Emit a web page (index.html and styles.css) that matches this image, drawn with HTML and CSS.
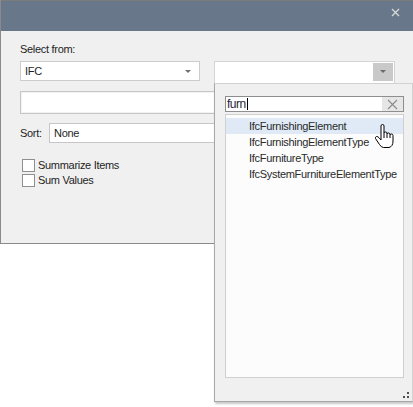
FILE: index.html
```html
<!DOCTYPE html>
<html lang="en">
<head>
    <meta charset="UTF-8">
    <title>Select from</title>
    <link rel="stylesheet" href="styles.css">
</head>
<body>
    <div class="dialog">
        <div class="titlebar">
            <svg class="close" width="9" height="9" viewBox="0 0 9 9"><path d="M1 1 L8 8 M8 1 L1 8" stroke="#d6d6d6" stroke-width="1.4"/></svg>
        </div>
        <div class="content">
            <div class="label">Select from:</div>
            <div class="combo-row">
                <div class="combo combo-source">
                    <span>IFC</span>
                    <svg class="arrow" width="6" height="4" viewBox="0 0 6 4"><path d="M0 0 H6 L3 3 Z" fill="#707070"/></svg>
                </div>
                <div class="combo combo-type">
                    <span class="drop-btn"><svg width="6" height="4" viewBox="0 0 6 4"><path d="M0 0 H6 L3 3 Z" fill="#6a6a6a"/></svg></span>
                </div>
            </div>
            <div class="textbox"></div>
            <div class="sort-row">
                <span class="sort-label">Sort:</span>
                <div class="combo combo-sort"><span>None</span></div>
            </div>
            <div class="checks">
                <label class="check"><span class="box"></span>Summarize Items</label>
                <label class="check"><span class="box"></span>Sum Values</label>
            </div>
        </div>
    </div>

    <div class="popup">
        <div class="search">
            <span class="search-text">furn</span><span class="caret"></span>
            <span class="clear"><svg width="11" height="11" viewBox="0 0 11 11"><path d="M1 1 L10 10 M10 1 L1 10" stroke="#8a8a8a" stroke-width="1.1"/></svg></span>
        </div>
        <ul class="list">
            <li class="active">IfcFurnishingElement</li>
            <li>IfcFurnishingElementType</li>
            <li>IfcFurnitureType</li>
            <li>IfcSystemFurnitureElementType</li>
        </ul>
        <div class="grip">
            <span class="dot d1"></span><span class="dot d2"></span><span class="dot d3"></span>
        </div>
    </div>

    <svg class="hand" width="21" height="25" viewBox="0 0 21 25">
        <path d="M7 2 Q7 0.5 8.5 0.5 Q10 0.5 10 2 L10 9 Q10 8 11.5 8 Q13 8 13 9.5 L13 10 Q13 9 14.5 9 Q16 9 16 10.5 L16 11 Q16 10 17.5 10 Q19 10 19 11.5 L19 17 Q19 22.5 15 23.5 L9.5 23.5 Q7.5 23.5 5.5 20.5 L1.5 14.5 Q1 13 2.5 12.5 Q4 12.3 5 13.8 L7 16 Z" fill="#fff" stroke="#000" stroke-width="1"/>
        <path d="M10 9 V14 M13 10 V14 M16 11 V14" stroke="#000" stroke-width="1" fill="none"/>
    </svg>
</body>
</html>
```

FILE: styles.css
```css
/* page */
html, body {
    margin: 0;
    padding: 0;
    overflow: hidden;
}

body {
    font-family: "Liberation Sans", Arial, sans-serif;
    font-size: 11px;
    letter-spacing: -0.3px;
    color: #1e1e1e;
    background: #ffffff;
    width: 413px;
    height: 407px;
    position: relative;
}

/* dialog window */
.dialog {
    width: 100%;
    height: 244px;
    box-sizing: border-box;
    border-left: 1px solid #8a8a8a;
    border-bottom: 1px solid #8a8a8a;
    background: #f0f0f0;
}

.titlebar {
    height: 31px;
    box-sizing: border-box;
    border-top: 1px solid #7c7c7c;
    background: #687789;
    display: flex;
    justify-content: flex-end;
    align-items: flex-start;
}

.close {
    margin: 7px 13px 0 0;
}

.content {
    padding: 11px 0 0 19px;
}

.label {
    line-height: 14px;
    height: 14px;
}

/* combo boxes */
.combo-row {
    display: flex;
    align-items: flex-start;
    gap: 14px;
    margin-top: 5px;
}

.combo {
    box-sizing: border-box;
    height: 20px;
    background: #fff;
    border: 1px solid #cccccc;
    display: flex;
    align-items: center;
    padding-left: 4px;
    position: relative;
}

.combo-source {
    width: 180px;
}

.combo-source .arrow {
    position: absolute;
    right: 8px;
    top: 8px;
}

.combo-type {
    width: 181px;
    height: 23px;
    padding: 0;
    justify-content: flex-end;
    border-color: #d4d4d4;
}

.drop-btn {
    width: 20px;
    height: 18px;
    margin-right: 1px;
    margin-top: -1px;
    background: #c9c9c9;
    display: flex;
    align-items: center;
    justify-content: center;
}

.textbox {
    box-sizing: border-box;
    width: 380px;
    height: 23px;
    margin-top: 7px;
    background: #fff;
    border: 1px solid #c6c6c6;
    box-shadow: inset 0 0 0 1px #f2f2f2;
}

.sort-row {
    display: flex;
    align-items: center;
    margin-top: 9px;
}

.sort-label {
    width: 29px;
}

.combo-sort {
    width: 340px;
    border-color: #c6c6c6;
}

/* checkboxes */
.checks {
    margin-top: 16px;
    display: flex;
    flex-direction: column;
    gap: 2px;
}

.check {
    display: flex;
    align-items: center;
    height: 13px;
    line-height: 13px;
}

.box {
    width: 11px;
    height: 11px;
    margin: 0 3px 0 2px;
    border: 1px solid #8f8f8f;
    background: #fff;
}

/* dropdown popup */
.popup {
    position: absolute;
    left: 214px;
    top: 83px;
    width: 199px;
    height: 319px;
    box-sizing: border-box;
    border: 1px solid #a8a8a8;
    border-top-color: #d2d2d2;
    border-right-color: #d2d2d2;
    background: #f0f0f0;
    padding: 12px 8px 0 10px;
    box-shadow: 1px 2px 2px rgba(0, 0, 0, 0.22);
}

.search {
    box-sizing: border-box;
    height: 16px;
    background: #fff;
    border: 1px solid #8e8e8e;
    display: flex;
    align-items: center;
    padding-left: 1px;
    font-size: 12px;
    letter-spacing: -0.5px;
    color: #1e1e3a;
}

.caret {
    width: 1px;
    height: 12px;
    margin-left: 1px;
    background: #000;
}

.clear {
    margin-left: auto;
    width: 21px;
    height: 14px;
    background: #e6e6e6;
    display: flex;
    align-items: center;
    justify-content: center;
}

.list {
    list-style: none;
    margin: 2px 0 0 0;
    padding: 3px 0 0 0;
    height: 264px;
    box-sizing: border-box;
    background: #fcfcfc;
    border: 1px solid #d0d0d0;
}

.list li {
    height: 16px;
    line-height: 16px;
    padding-left: 23px;
    color: #2a2a2a;
}

.list li.active {
    background: #dfeaf6;
}

.grip {
    position: absolute;
    right: 2px;
    bottom: 2px;
    width: 8px;
    height: 8px;
}

.dot {
    position: absolute;
    width: 2px;
    height: 2px;
    background: #505050;
}

.d1 { right: 1px; top: 1px; }
.d2 { right: 1px; bottom: 1px; }
.d3 { right: 5px; bottom: 1px; }

/* mouse pointer */
.hand {
    position: absolute;
    left: 374px;
    top: 124px;
}
```
